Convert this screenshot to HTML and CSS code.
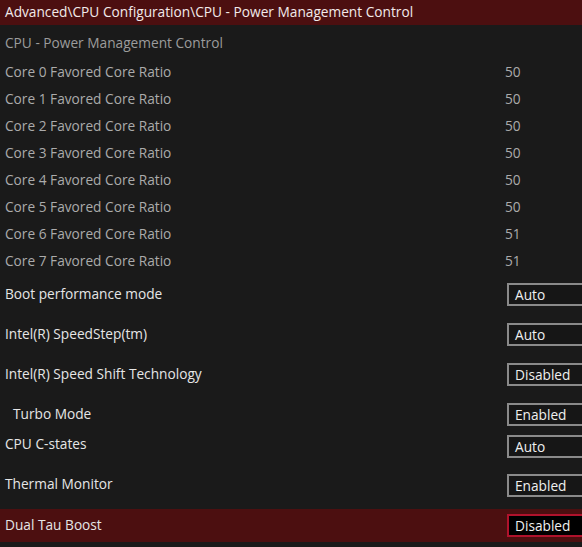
FILE: index.html
```html
<!DOCTYPE html>
<html>
<head>
<meta charset="utf-8">
<link rel="stylesheet" href="styles.css">
</head>
<body>
<div class="page">
  <div class="crumb">Advanced\CPU Configuration\CPU - Power Management Control</div>
  <div class="list">
    <div class="title">CPU - Power Management Control</div>
    <div class="info"><span class="label">Core 0 Favored Core Ratio</span><span class="value">50</span></div>
    <div class="info"><span class="label">Core 1 Favored Core Ratio</span><span class="value">50</span></div>
    <div class="info"><span class="label">Core 2 Favored Core Ratio</span><span class="value">50</span></div>
    <div class="info"><span class="label">Core 3 Favored Core Ratio</span><span class="value">50</span></div>
    <div class="info"><span class="label">Core 4 Favored Core Ratio</span><span class="value">50</span></div>
    <div class="info"><span class="label">Core 5 Favored Core Ratio</span><span class="value">50</span></div>
    <div class="info"><span class="label">Core 6 Favored Core Ratio</span><span class="value">51</span></div>
    <div class="info"><span class="label">Core 7 Favored Core Ratio</span><span class="value">51</span></div>
    <div class="setting"><span class="label">Boot performance mode</span><span class="box">Auto</span></div>
    <div class="setting"><span class="label">Intel(R) SpeedStep(tm)</span><span class="box">Auto</span></div>
    <div class="setting"><span class="label">Intel(R) Speed Shift Technology</span><span class="box">Disabled</span></div>
    <div class="setting"><span class="label indent">Turbo Mode</span><span class="box">Enabled</span></div>
    <div class="setting short"><span class="label">CPU C-states</span><span class="box">Auto</span></div>
    <div class="setting thermal"><span class="label">Thermal Monitor</span><span class="box">Enabled</span></div>
    <div class="setting selected"><span class="label">Dual Tau Boost</span><span class="box">Disabled</span></div>
  </div>
</div>
</body>
</html>
```
FILE: styles.css
```css
html, body {
  margin: 0;
  padding: 0;
  background: #1a1a1a;
  overflow: hidden;
}
.page {
  width: 582px;
  height: 547px;
  overflow: hidden;
  font-family: "Open Sans", "DejaVu Sans", sans-serif;
  font-size: 13.7px;
}
.crumb {
  height: 25px;
  line-height: 23px;
  padding-left: 5px;
  background: #4c0f10;
  color: #f2eaea;
  white-space: nowrap;
}
.list {
  padding-top: 4px;
}
.title {
  height: 27px;
  line-height: 27px;
  padding-left: 5px;
  margin-bottom: 2px;
  color: #9c9c9c;
}
.info {
  height: 27px;
  display: flex;
  align-items: center;
  padding-left: 5px;
  color: #ababab;
}
.info .label {
  width: 500px;
  flex: none;
}
.setting {
  height: 40px;
  display: flex;
  align-items: center;
  padding-left: 5px;
  color: #e6e6e6;
  white-space: nowrap;
}
.setting .label {
  width: 502px;
  flex: none;
  position: relative;
  top: -1px;
}
.setting .label.indent {
  padding-left: 8px;
  width: 494px;
}
.setting.short {
  height: 24px;
}
.setting.short .label {
  top: -3px;
}
.setting.thermal {
  margin-top: 8px;
  height: 39px;
}
.setting.thermal .label {
  top: -2px;
}
.setting.selected {
  margin-top: 4px;
  height: 33px;
  background: #4c0f10;
}
.box {
  flex: none;
  box-sizing: border-box;
  width: 90px;
  height: 23px;
  line-height: 19px;
  padding-left: 6px;
  border: 2px solid #8a8a8a;
  color: #f0f0f0;
  background: #161616;
}
.selected .box {
  border-color: #b0122c;
  background: #000000;
}
```
